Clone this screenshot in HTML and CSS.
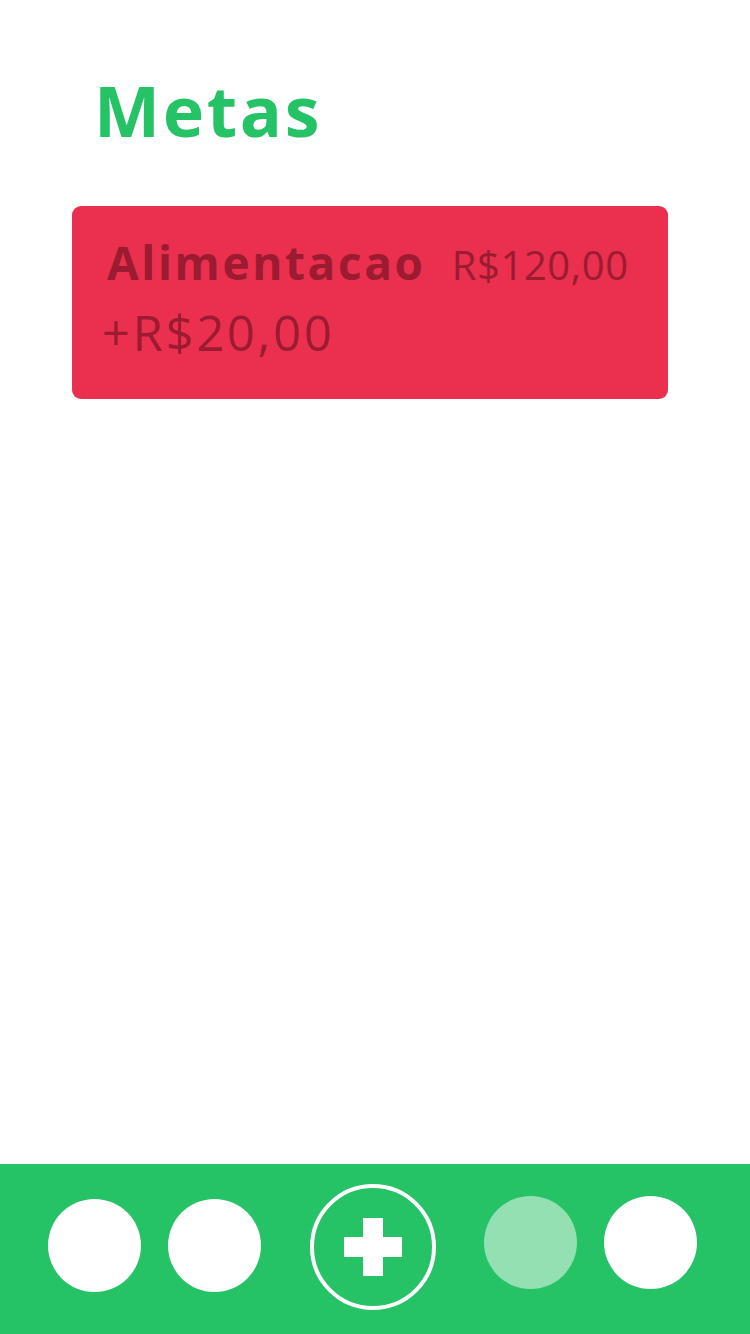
FILE: index.html
```html
<!DOCTYPE html>
<html lang="pt">
<head>
<meta charset="utf-8">
<title>Metas</title>
<link rel="stylesheet" href="styles.css">
</head>
<body>
<div class="app">
  <main class="content">
    <h1 class="title">Metas</h1>
    <div class="card">
      <div class="card-top">
        <span class="card-name">Alimentacao</span>
        <span class="card-goal">R$120,00</span>
      </div>
      <div class="card-amount">+R$20,00</div>
    </div>
  </main>
  <nav class="nav">
    <span class="dot dot-a"></span>
    <span class="dot dot-b"></span>
    <span class="add">
      <svg width="58" height="58" viewBox="0 0 58 58"><path d="M19 0h20v19h19v20H39v19H19V39H0V19h19z" fill="#fff"/></svg>
    </span>
    <span class="dot dot-c faded"></span>
    <span class="dot dot-d"></span>
  </nav>
</div>
</body>
</html>
```
FILE: styles.css
```css
html, body {
  margin: 0;
  padding: 0;
  background: #ffffff;
}
.app {
  display: flex;
  flex-direction: column;
  min-height: 1334px;
  font-family: "Open Sans", "Liberation Sans", sans-serif;
}
.content {
  flex: 1;
  display: flex;
  flex-direction: column;
}
.title {
  margin: 62px 0 0 94px;
  font-size: 70px;
  line-height: 96px;
  font-weight: 700;
  color: #25c266;
  letter-spacing: 2.7px;
}
.card {
  margin: 48px 0 0 72px;
  width: 596px;
  height: 193px;
  box-sizing: border-box;
  background: #ea2f4f;
  border-radius: 9px;
  padding: 26px 0 0 30px;
  color: #9b1b30;
}
.card-top {
  display: flex;
  align-items: baseline;
  gap: 26px;
  padding-left: 5px;
}
.card-name {
  font-size: 46px;
  font-weight: 700;
  line-height: 60px;
  letter-spacing: 2.6px;
}
.card-goal {
  font-size: 40px;
  font-weight: 400;
  line-height: 60px;
  letter-spacing: 0.6px;
}
.card-amount {
  font-size: 49px;
  line-height: 66px;
  margin-top: 4px;
  letter-spacing: 2.7px;
}
.nav {
  height: 170px;
  background: #25c266;
  display: flex;
  align-items: flex-start;
  padding-left: 48px;
  box-sizing: border-box;
}
.dot {
  width: 93px;
  height: 93px;
  border-radius: 50%;
  background: #ffffff;
  flex: none;
}
.dot-a { margin-top: 35px; }
.dot-b { margin-top: 35px; margin-left: 27px; }
.dot-c { margin-top: 32px; margin-left: 48px; }
.dot-d { margin-top: 32px; margin-left: 27px; }
.faded { background: #95e0b3; }
.add {
  flex: none;
  margin-top: 20px;
  margin-left: 49px;
  width: 126px;
  height: 126px;
  box-sizing: border-box;
  border: 4px solid #ffffff;
  border-radius: 50%;
  display: flex;
  align-items: center;
  justify-content: center;
}
.add svg { display: block; }
```
